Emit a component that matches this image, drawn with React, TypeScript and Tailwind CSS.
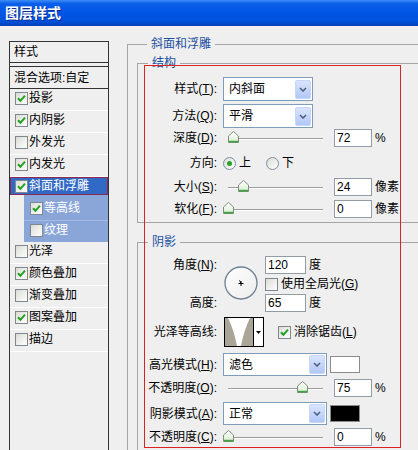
import React from "react";

const F = "font-['Liberation_Sans','Noto_Sans_CJK_SC',sans-serif]";

function Check({ on }: { on: boolean }) {
  return (
    <span className="w-[13px] h-[13px] shrink-0 border border-[#7f8890] bg-[linear-gradient(135deg,#dcdcd6,#ffffff)] flex items-center justify-center">
      {on && (
        <svg width="9" height="9" viewBox="0 0 9 9">
          <path d="M1 4.3 L3.4 6.8 L8 1.6" fill="none" stroke="#21a121" strokeWidth="2" />
        </svg>
      )}
    </span>
  );
}

function Radio({ on }: { on: boolean }) {
  return (
    <span className="w-[13px] h-[13px] shrink-0 rounded-full border border-[#7a8ea6] bg-[linear-gradient(135deg,#dcdcd6,#ffffff)] flex items-center justify-center">
      {on && <span className="w-[5px] h-[5px] rounded-full bg-[#2aa22a]" />}
    </span>
  );
}

function ListRow({ label, on }: { label: string; on: boolean }) {
  return (
    <div className="h-[22px] pb-[3px] border-b border-white flex items-center pl-[5px] gap-[1px]">
      <Check on={on} />
      <span className="leading-[16px]">{label}</span>
    </div>
  );
}

function Select({ cls, text }: { cls: string; text: string }) {
  return (
    <div className={"flex items-center bg-white border border-[#7f9db9] shrink-0 " + cls}>
      <span className="flex-1 pl-[5px] leading-[16px]">{text}</span>
      <span className="w-[16px] h-[19px] mr-[1px] rounded-[2px] border border-[#c6d5fb] bg-[linear-gradient(to_bottom,#dae5fd,#b2c7f5)] flex items-center justify-center">
        <svg width="8" height="5" viewBox="0 0 8 5">
          <path d="M1 1 L4 4 L7 1" fill="none" stroke="#4d6185" strokeWidth="1.6" />
        </svg>
      </span>
    </div>
  );
}

function Input({ cls, v }: { cls: string; v: string }) {
  return (
    <div className={"h-[18px] bg-white border border-[#939ca4] flex items-center pl-[2px] leading-[14px] shrink-0 " + cls}>
      {v}
    </div>
  );
}

function Thumb() {
  return (
    <svg width="11" height="12" viewBox="0 0 11 12">
      <defs>
        <linearGradient id="tg" x1="0" y1="0" x2="0" y2="1">
          <stop offset="0" stopColor="#ffffff" />
          <stop offset="1" stopColor="#d8eed0" />
        </linearGradient>
      </defs>
      <path d="M5.5 0.5 L10.5 5 V11.5 H0.5 V5 Z" fill="url(#tg)" stroke="#7f8f7f" />
      <path d="M1 10.6 H10" stroke="#3fa33f" strokeWidth="1.6" />
    </svg>
  );
}

function Slider({ thumb }: { thumb: string }) {
  return (
    <div className="relative w-[105px] h-[20px] shrink-0">
      <div className="absolute left-[5px] top-[10px] w-[95px] h-[2px] border-t border-[#9d9d9d] border-b border-b-white" />
      <div className={"absolute top-[3px] " + thumb}>
        <Thumb />
      </div>
    </div>
  );
}

function Label({ children }: { children: React.ReactNode }) {
  return <div className="w-[79px] shrink-0 text-right leading-[16px] whitespace-nowrap">{children}</div>;
}

function SliderRow({
  label,
  thumb,
  v,
  unit,
  cls,
}: {
  label: React.ReactNode;
  thumb: string;
  v: string;
  unit: string;
  cls: string;
}) {
  return (
    <div className={"flex items-center h-[20px] " + cls}>
      <Label>{label}</Label>
      <div className="ml-[6px] flex items-center">
        <Slider thumb={thumb} />
        <Input cls="ml-[6px] w-[38px]" v={v} />
        <span className="ml-[3px] leading-[16px]">{unit}</span>
      </div>
    </div>
  );
}

function AngleDial() {
  return (
    <svg width="34" height="34" viewBox="0 0 34 34">
      <defs>
        <linearGradient id="dg" x1="0" y1="0" x2="1" y2="1">
          <stop offset="0" stopColor="#ffffff" />
          <stop offset="1" stopColor="#ececec" />
        </linearGradient>
      </defs>
      <circle cx="17" cy="17" r="16" fill="url(#dg)" stroke="#6f7f92" strokeWidth="1.3" />
      <path d="M14.5 17.5 H19.5 M17 15 V20" stroke="#000" strokeWidth="1" />
      <path d="M17 17 L15.5 14.4" stroke="#000" strokeWidth="1" />
    </svg>
  );
}

function Contour() {
  return (
    <div className="w-[40px] h-[30px] border border-black flex shrink-0 bg-white">
      <svg width="28" height="28" viewBox="0 0 28 28">
        <rect x="0" y="0" width="28" height="28" fill="#a9a597" />
        <path d="M3 0 H25 Q19 12 16 28 H12 Q9 12 3 0 Z" fill="#ffffff" />
      </svg>
      <div className="flex-1 border-l border-black flex items-center justify-center">
        <svg width="5" height="3" viewBox="0 0 5 3">
          <path d="M0 0 H5 L2.5 3 Z" fill="#000" />
        </svg>
      </div>
    </div>
  );
}

function LeftPanel() {
  return (
    <div className="ml-[9px] mt-[15px] w-[100px] h-[420px] shrink-0 border border-[#333333] bg-[#efefef] flex flex-col">
      <div className="h-[21px] border-b border-[#333333] flex items-center pl-[4px] leading-[16px]">样式</div>
      <div className="h-[4px] border-b border-[#333333]" />
      <div className="h-[22px] border-b border-[#333333] flex items-center pl-[4px] leading-[16px]">混合选项:自定</div>
      <ListRow label="投影" on={true} />
      <ListRow label="内阴影" on={true} />
      <ListRow label="外发光" on={false} />
      <ListRow label="内发光" on={true} />
      <div className="h-[18px] border border-[#8c2a52] bg-[#316ac5] text-white flex items-center pl-[4px] gap-[1px]">
        <Check on={true} />
        <span className="leading-[16px]">斜面和浮雕</span>
      </div>
      <div className="ml-[14px] bg-[#8aa5d8] text-white">
        <div className="h-[25px] pt-[1px] flex items-center pl-[6px] gap-[1px]">
          <Check on={true} />
          <span className="leading-[16px]">等高线</span>
        </div>
        <div className="h-[22px] pb-[3px] border-t border-[#a6bbe4] flex items-center pl-[6px] gap-[1px]">
          <Check on={false} />
          <span className="leading-[16px]">纹理</span>
        </div>
      </div>
      <ListRow label="光泽" on={false} />
      <ListRow label="颜色叠加" on={true} />
      <ListRow label="渐变叠加" on={false} />
      <ListRow label="图案叠加" on={true} />
      <ListRow label="描边" on={false} />
    </div>
  );
}

function RightPanel() {
  return (
    <div className="ml-[18px] mt-[10px] shrink-0">
      <fieldset className="w-[300px] border border-[#a5a5a5] pl-[9px] pt-[3px] pb-[20px]">
        <legend className="ml-[10px] px-[4px] leading-[16px] text-[#1c4fa0]">斜面和浮雕</legend>

        <fieldset className="border border-[#a5a5a5] pt-[6px] pb-[3px]">
          <legend className="ml-[10px] px-[4px] leading-[16px] text-[#1c4fa0]">结构</legend>
          <div className="flex items-center h-[24px]">
            <Label>
              样式(<u>T</u>):
            </Label>
            <Select cls="ml-[6px] w-[90px] h-[24px]" text="内斜面" />
          </div>
          <div className="flex items-center h-[24px] mt-[3px]">
            <Label>
              方法(<u>Q</u>):
            </Label>
            <Select cls="ml-[6px] w-[90px] h-[24px]" text="平滑" />
          </div>
          <SliderRow
            cls=""
            label={
              <>
                深度(<u>D</u>):
              </>
            }
            thumb="left-[5px]"
            v="72"
            unit="%"
          />
          <div className="flex items-center h-[20px] mt-[5px]">
            <Label>方向:</Label>
            <div className="ml-[6px] flex items-center">
              <Radio on={true} />
              <span className="ml-[3px] leading-[16px]">上</span>
              <span className="ml-[15px]">
                <Radio on={false} />
              </span>
              <span className="ml-[3px] leading-[16px]">下</span>
            </div>
          </div>
          <SliderRow
            cls="mt-[4px]"
            label={
              <>
                大小(<u>S</u>):
              </>
            }
            thumb="left-[15px]"
            v="24"
            unit="像素"
          />
          <SliderRow
            cls="mt-[2px]"
            label={
              <>
                软化(<u>F</u>):
              </>
            }
            thumb="left-[0px]"
            v="0"
            unit="像素"
          />
        </fieldset>

        <fieldset className="mt-[11px] border border-[#a5a5a5] pt-[6px] pb-[20px]">
          <legend className="ml-[10px] px-[4px] leading-[16px] text-[#1c4fa0]">阴影</legend>
          <div className="flex items-start">
            <div className="w-[79px] h-[56px] shrink-0 flex flex-col justify-between">
              <div className="h-[18px] flex items-center justify-end leading-[16px]">
                角度(<u>N</u>):
              </div>
              <div className="h-[18px] flex items-center justify-end leading-[16px]">高度:</div>
            </div>
            <div className="ml-[7px] mt-[10px] w-[34px] h-[34px] shrink-0">
              <AngleDial />
            </div>
            <div className="ml-[7px] flex flex-col">
              <div className="h-[18px] flex items-center">
                <Input cls="w-[41px]" v="120" />
                <span className="ml-[3px] leading-[16px]">度</span>
              </div>
              <div className="h-[20px] flex items-center">
                <Check on={false} />
                <span className="ml-[3px] leading-[16px] whitespace-nowrap">
                  使用全局光(<u>G</u>)
                </span>
              </div>
              <div className="h-[18px] flex items-center">
                <Input cls="w-[41px]" v="65" />
                <span className="ml-[3px] leading-[16px]">度</span>
              </div>
            </div>
          </div>
          <div className="flex items-center h-[30px] mt-[5px]">
            <Label>光泽等高线:</Label>
            <div className="ml-[7px]">
              <Contour />
            </div>
            <div className="ml-[14px]">
              <Check on={true} />
            </div>
            <span className="ml-[3px] leading-[16px] whitespace-nowrap">
              消除锯齿(<u>L</u>)
            </span>
          </div>
          <div className="flex items-center h-[23px] mt-[6px]">
            <Label>
              高光模式(<u>H</u>):
            </Label>
            <Select cls="ml-[6px] w-[104px] h-[23px]" text="滤色" />
            <div className="ml-[3px] w-[30px] h-[17px] border border-[#8b8b8b] bg-white shrink-0" />
          </div>
          <SliderRow
            cls="mt-[2px]"
            label={
              <>
                不透明度(<u>O</u>):
              </>
            }
            thumb="left-[74px]"
            v="75"
            unit="%"
          />
          <div className="flex items-center h-[23px] mt-[4px]">
            <Label>
              阴影模式(<u>A</u>):
            </Label>
            <Select cls="ml-[6px] w-[104px] h-[23px]" text="正常" />
            <div className="ml-[3px] w-[30px] h-[17px] border border-[#8b8b8b] bg-black shrink-0" />
          </div>
          <SliderRow
            cls="mt-[2px]"
            label={
              <>
                不透明度(<u>C</u>):
              </>
            }
            thumb="left-[0px]"
            v="0"
            unit="%"
          />
        </fieldset>
      </fieldset>
    </div>
  );
}

export default function App() {
  return (
    <div className={`relative w-[418px] h-[450px] overflow-hidden bg-[#efefef] text-[12px] text-black ${F}`}>
      <div className="h-[26px] bg-[linear-gradient(to_bottom,#3d8ef8_0%,#0b5ee8_14%,#0055e4_50%,#0050dc_82%,#003fb6_100%)] flex items-center pl-[5px] text-white text-[14px] font-bold leading-none [text-shadow:1px_1px_0_#0a2a8a]">
        图层样式
      </div>
      <div className="flex items-start">
        <LeftPanel />
        <RightPanel />
      </div>
      <div className="absolute left-[144px] top-[65px] w-[257px] h-[383px] border border-[#dd2222] pointer-events-none" />
    </div>
  );
}
